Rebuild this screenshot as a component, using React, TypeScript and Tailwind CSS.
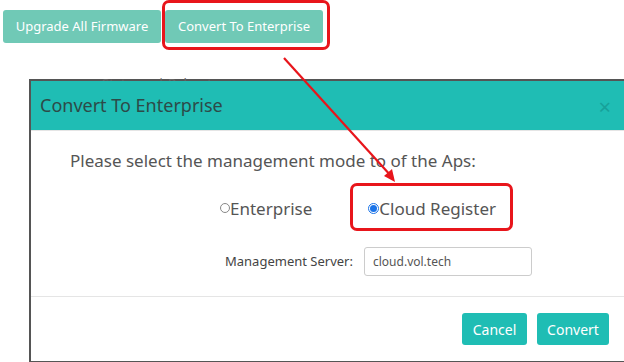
import React from "react";

const font = { fontFamily: '"Noto Sans", "Open Sans", sans-serif' };

export default function App() {
  return (
    <div className="relative w-[624px] h-[362px] overflow-hidden bg-white" style={font}>
      {/* toolbar */}
      <div className="flex gap-[4px] pl-[3px] pt-[10px]">
        <button className="h-[33px] w-[158px] rounded-[3px] bg-[#70c9b6] text-[13px] text-white">
          Upgrade All Firmware
        </button>
        <button className="h-[33px] w-[158px] rounded-[3px] bg-[#70c9b6] text-[13px] text-white">
          Convert To Enterprise
        </button>
      </div>

      {/* table header behind the dialog */}
      <div className="mt-[33px] h-[5px] overflow-hidden pl-[102px] text-[13px] leading-[14px] text-[#666]">
        Status <span className="ml-[14px]">| Reboot</span>
      </div>

      {/* dialog */}
      <div className="ml-[29px] mt-[-2px] w-[620px] border-2 border-[#555] bg-white">
        <div className="flex h-[50px] items-center justify-between border-b border-[#e5e5e5] bg-[#1fbdb4] pl-[9px] pr-[36px]">
          <span className="text-[18px] text-[#2d4a48]">Convert To Enterprise</span>
          <span className="text-[22px] leading-none text-[#17a199]">×</span>
        </div>

        <div className="h-[166px] border-b border-[#e5e5e5]">
          <p className="pl-[39px] pt-[17px] text-[17px] text-[#555]">
            Please select the management mode to of the Aps:
          </p>
          <div className="mt-[22px] flex items-center pl-[189px] text-[17px] text-[#555]">
            <label className="flex items-center">
              <span className="inline-block h-[10px] w-[10px] rounded-full border border-[#888]" />
              Enterprise
            </label>
            <label className="ml-[56px] flex items-center">
              <span className="flex h-[11px] w-[11px] items-center justify-center rounded-full border border-[#1a73e8]">
                <span className="h-[7px] w-[7px] rounded-full bg-[#1a73e8]" />
              </span>
              Cloud Register
            </label>
          </div>
          <div className="mt-[26px] flex items-center pl-[194px]">
            <span className="w-[139px] text-[13px] text-[#444]">Management Server:</span>
            <div className="flex h-[29px] w-[168px] items-center rounded-[3px] border border-[#ccc] px-[8px] text-[12px] text-[#555]">
              cloud.vol.tech
            </div>
          </div>
        </div>

        <div className="flex h-[64px] items-center gap-[10px] pl-[431px]">
          <button className="h-[32px] w-[65px] rounded-[3px] bg-[#1fbdb4] text-[14px] text-white">Cancel</button>
          <button className="h-[32px] w-[72px] rounded-[3px] bg-[#1fbdb4] text-[14px] text-white">Convert</button>
        </div>
      </div>

      {/* annotations */}
      <div className="absolute left-[162px] top-[0px] h-[50px] w-[168px] rounded-[7px] border-[3px] border-[#e8151b]" />
      <div className="absolute left-[350px] top-[183px] h-[48px] w-[163px] rounded-[7px] border-[3px] border-[#e8151b]" />
      <svg className="absolute left-0 top-0" width="624" height="362">
        <line x1="284" y1="58" x2="392" y2="177" stroke="#e8151b" strokeWidth="2.2" />
        <path d="M395 182 L384 176 L392 169 Z" fill="#e8151b" />
      </svg>
    </div>
  );
}
